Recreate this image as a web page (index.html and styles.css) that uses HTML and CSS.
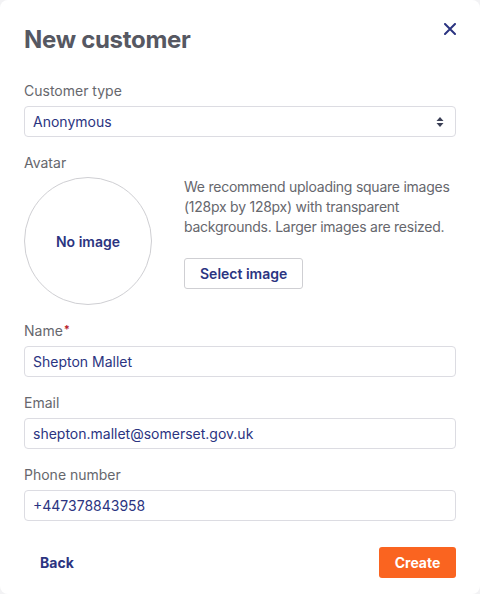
FILE: index.html
```html
<!DOCTYPE html>
<html lang="en">
<head>
<meta charset="utf-8">
<link rel="stylesheet" href="styles.css">
</head>
<body>
<div class="modal">
  <div class="header">
    <h1 class="title">New customer</h1>
    <button class="close" aria-label="Close">
      <svg width="12" height="12" viewBox="0 0 12 12"><path d="M1 1L11 11M11 1L1 11" stroke="#2b3481" stroke-width="2" stroke-linecap="round"/></svg>
    </button>
  </div>

  <div class="field">
    <label class="label">Customer type</label>
    <div class="select">
      <span>Anonymous</span>
      <svg width="8" height="12" viewBox="0 0 8 12"><path d="M4 1L7.5 5H0.5Z M4 11L0.5 7H7.5Z" fill="#3a3f55"/></svg>
    </div>
  </div>

  <div class="field">
    <label class="label">Avatar</label>
    <div class="avatar-row">
      <div class="avatar">No image</div>
      <div class="avatar-info">
        <p class="hint">We recommend uploading square images (128px by 128px) with transparent backgrounds. Larger images are resized.</p>
        <button class="btn-outline">Select image</button>
      </div>
    </div>
  </div>

  <div class="field">
    <label class="label">Name<span class="req">*</span></label>
    <div class="input">Shepton Mallet</div>
  </div>

  <div class="field">
    <label class="label">Email</label>
    <div class="input">shepton.mallet@somerset.gov.uk</div>
  </div>

  <div class="field">
    <label class="label">Phone number</label>
    <div class="input">+447378843958</div>
  </div>

  <div class="footer">
    <button class="btn-link">Back</button>
    <button class="btn-primary">Create</button>
  </div>
</div>
</body>
</html>
```

FILE: styles.css
```css
* { box-sizing: border-box; }
html, body {
  margin: 0;
  padding: 0;
  background: #f2f2f4;
  font-family: Inter, "Noto Sans", sans-serif;
}
.modal {
  width: 480px;
  height: 594px;
  background: #fff;
  border-radius: 8px;
  padding: 24px 24px 0 24px;
}
.header {
  display: flex;
  justify-content: space-between;
  align-items: flex-start;
  height: 32px;
  margin-bottom: 25px;
}
.title {
  margin: 0;
  font-size: 24px;
  line-height: 32px;
  font-weight: 700;
  color: #565862;
  letter-spacing: -0.3px;
}
.close {
  border: 0;
  background: none;
  padding: 0;
  margin-top: -1px;
  width: 12px;
  height: 12px;
  display: flex;
}
.field {
  margin-bottom: 16px;
}
.label {
  display: block;
  font-size: 14px;
  line-height: 20px;
  color: #66676d;
  margin-bottom: 5px;
}
.req {
  color: #b8232b;
  font-size: 11px;
  vertical-align: top;
  margin-left: 1px;
  line-height: 16px;
  font-weight: 700;
}
.select, .input {
  height: 31px;
  border: 1px solid #dcdce2;
  border-radius: 4px;
  padding: 0 11px 0 8px;
  display: flex;
  align-items: center;
  justify-content: space-between;
  font-size: 14px;
  color: #2b3481;
}
.avatar-row {
  display: flex;
  gap: 32px;
  height: 128px;
  margin-top: -1px;
}
.avatar {
  flex: none;
  width: 128px;
  height: 128px;
  border-radius: 50%;
  border: 1px solid #cfcfd3;
  display: flex;
  align-items: center;
  justify-content: center;
  font-size: 14px;
  font-weight: 600;
  color: #2b3481;
}
.avatar-info {
  flex: 1;
  display: flex;
  flex-direction: column;
  align-items: flex-start;
}
.hint {
  margin: 0 0 21px 0;
  font-size: 14px;
  line-height: 20px;
  color: #66676d;
  letter-spacing: -0.25px;
}
.btn-outline {
  height: 31px;
  padding: 0 15px;
  background: #fff;
  border: 1px solid #cfcfd3;
  border-radius: 3px;
  font-family: inherit;
  font-size: 14px;
  font-weight: 600;
  color: #2b3481;
}
.footer {
  display: flex;
  justify-content: space-between;
  align-items: center;
  margin-top: 26px;
}
.btn-link {
  background: none;
  border: 0;
  padding: 0 16px;
  height: 31px;
  font-family: inherit;
  font-size: 14px;
  font-weight: 700;
  color: #2b3481;
}
.btn-primary {
  height: 31px;
  width: 77px;
  background: #fa6420;
  border: 0;
  border-radius: 3px;
  color: #fff;
  font-family: inherit;
  font-size: 14px;
  font-weight: 700;
}
```
